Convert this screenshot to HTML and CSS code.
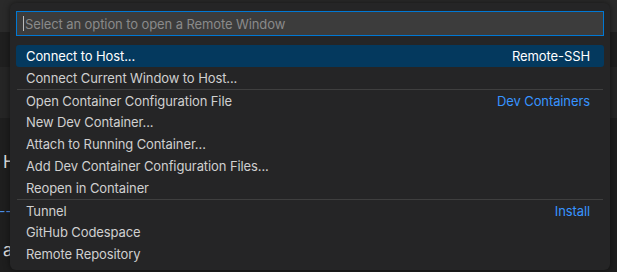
FILE: index.html
```html
<!DOCTYPE html>
<html lang="en">
<head>
  <meta charset="UTF-8" />
  <title>Remote Window</title>
  <link rel="stylesheet" href="styles.css">
</head>
<body>

<div class="workbench">
  <div class="titlebar"></div>
  <div class="editor">
    <div class="band band-a"></div>
    <div class="band band-b"></div>
    <div class="peek">
      <span class="peek-h">H</span>
      <span class="peek-link">--|</span>
      <span class="peek-a">a1</span>
    </div>
  </div>
</div>

<div class="quick-input">
  <div class="qi-box">
    <span class="caret"></span>
    <span class="placeholder">Select an option to open a Remote Window</span>
  </div>
  <ul class="qi-list">
    <li class="item selected"><span>Connect to Host...</span><span class="tag">Remote-SSH</span></li>
    <li class="item"><span>Connect Current Window to Host...</span></li>
    <li class="item sep"><span>Open Container Configuration File</span><span class="tag link">Dev Containers</span></li>
    <li class="item"><span>New Dev Container...</span></li>
    <li class="item"><span>Attach to Running Container...</span></li>
    <li class="item"><span>Add Dev Container Configuration Files...</span></li>
    <li class="item"><span>Reopen in Container</span></li>
    <li class="item sep"><span>Tunnel</span><span class="tag link">Install</span></li>
    <li class="item"><span>GitHub Codespace</span></li>
    <li class="item"><span>Remote Repository</span></li>
  </ul>
</div>

</body>
</html>
```

FILE: styles.css
```css
html, body {
  margin: 0;
  height: 100%;
  overflow: hidden;
  background: #1c1c1c;
  font-family: 'Inter', 'Noto Sans', sans-serif;
  font-size: 13px;
}
.workbench {
  height: 100%;
  display: flex;
  flex-direction: column;
}
.titlebar {
  height: 32px;
  background: #2a2a2a;
}
.editor {
  flex: 1;
  background: #1e1e1e;
}
.band-a { height: 35px; background: #1f1f1f; }
.band-b { height: 51px; background: #252525; }
.peek {
  display: flex;
  flex-direction: column;
  padding: 36px 0 0 3px;
  gap: 28px;
  color: #ddd;
  font-size: 17px;
  line-height: 16px;
}
.peek-link { color: #4d8fe6; font-size: 14px; margin-left: -4px; margin-top: 6px; }
.peek-a { margin-top: -6px; }

/* quick pick */
.quick-input {
  position: absolute;
  top: 3px;
  left: 10px;
  width: 600px;
  height: 267px;
  background: #252526;
  border-radius: 6px;
  box-shadow: 0 0 6px rgba(0, 0, 0, 0.5);
  padding: 8px 6px 0;
  box-sizing: border-box;
  letter-spacing: -0.1px;
}
.qi-box {
  height: 25px;
  border: 1px solid #0078d4;
  background: #3c3c3c;
  box-sizing: border-box;
  display: flex;
  align-items: center;
  padding-left: 6px;
  color: #8a8a8a;
}
.caret {
  width: 1px;
  height: 15px;
  background: #bbb;
  margin-right: 1px;
}
.qi-list {
  list-style: none;
  margin: 9px 0 0;
  padding: 0;
}
.item {
  height: 22px;
  display: flex;
  align-items: center;
  justify-content: space-between;
  padding: 0 14px 0 10px;
  color: #d0d0d0;
  border-radius: 3px;
  box-sizing: border-box;
}
.item.selected {
  background: #04395e;
  color: #fff;
}
.item.sep {
  border-top: 1px solid #3f3f3f;
  border-radius: 0;
  margin: 0 1px;
  padding-left: 9px;
  padding-right: 13px;
}
.tag { color: #fff; }
.tag.link { color: #3794ff; }
```
